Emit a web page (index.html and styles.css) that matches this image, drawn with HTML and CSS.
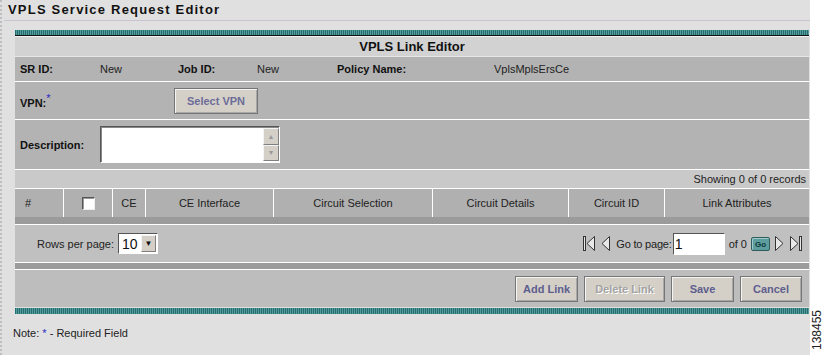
FILE: index.html
```html
<!DOCTYPE html>
<html lang="en">
  <head>
    <meta charset="UTF-8">
    <title>VPLS Service Request Editor</title>
    <link rel="stylesheet" href="styles.css">
  </head>
<body>
  <div class="page">
    <h1 class="page-title">VPLS Service Request Editor</h1>

    <div class="panel">
      <div class="stripe"></div>
      <div class="panel-head">VPLS Link Editor</div>

      <div class="row info-row">
        <span class="label">SR ID:</span>
        <span>New</span>
        <span class="label">Job ID:</span>
        <span>New</span>
        <span class="label">Policy Name:</span>
        <span>VplsMplsErsCe</span>
      </div>

      <div class="row vpn-row">
        <span class="label">VPN:<sup class="req">*</sup></span>
        <button class="btn btn-wide">Select VPN</button>
      </div>

      <div class="row desc-row">
        <span class="label">Description:</span>
        <div class="textbox">
          <div class="textbox-area"></div>
          <div class="scroll">
            <span class="scroll-btn">&#9650;</span>
            <span class="scroll-btn">&#9660;</span>
          </div>
        </div>
      </div>

      <div class="row count-row">Showing 0 of 0 records</div>

      <div class="grid-head">
        <div class="cell cell-left">#</div>
        <div class="cell"><span class="checkbox"></span></div>
        <div class="cell">CE</div>
        <div class="cell">CE Interface</div>
        <div class="cell">Circuit Selection</div>
        <div class="cell">Circuit Details</div>
        <div class="cell">Circuit ID</div>
        <div class="cell cell-last">Link Attributes</div>
      </div>
      <div class="band"></div>

      <div class="row pager-row">
        <div class="rows-per-page">
          Rows per page:
          <div class="select">
            <span class="select-value">10</span>
            <span class="select-btn">&#9660;</span>
          </div>
        </div>
        <div class="pager-nav">
          <svg class="nav-icon" width="13" height="17" viewBox="0 0 13 17">
            <rect x="0.5" y="1.5" width="2" height="14" fill="#e8e8e8" stroke="#333"/>
            <path d="M11.5 1.5 L4 8.5 L11.5 15.5 Z" fill="#e8e8e8" stroke="#333"/>
          </svg>
          <svg class="nav-icon" width="11" height="17" viewBox="0 0 11 17">
            <path d="M9.5 1.5 L2 8.5 L9.5 15.5 Z" fill="#e8e8e8" stroke="#333"/>
          </svg>
          <span class="go-label">Go to page:</span>
          <span class="page-input">1</span>
          <span>of 0</span>
          <span class="go-btn">Go</span>
          <svg class="nav-icon" width="11" height="17" viewBox="0 0 11 17">
            <path d="M1.5 1.5 L9 8.5 L1.5 15.5 Z" fill="#e8e8e8" stroke="#333"/>
          </svg>
          <svg class="nav-icon" width="14" height="17" viewBox="0 0 14 17">
            <path d="M1.5 1.5 L9 8.5 L1.5 15.5 Z" fill="#e8e8e8" stroke="#333"/>
            <rect x="10.5" y="1.5" width="2" height="14" fill="#e8e8e8" stroke="#333"/>
          </svg>
        </div>
      </div>
      <div class="band band-low"></div>

      <div class="row action-row">
        <button class="btn">Add Link</button>
        <button class="btn btn-off">Delete Link</button>
        <button class="btn">Save</button>
        <button class="btn">Cancel</button>
      </div>
      <div class="stripe stripe-bottom"></div>
    </div>

    <p class="note">Note: <span class="req">*</span> - Required Field</p>
  </div>

  <div class="fig-id">138455</div>
</body>
</html>
```

FILE: styles.css
```css
body {
  margin: 0;
  padding: 0;
  background: #fff;
  font-family: "Liberation Sans", Arial, sans-serif;
  font-size: 11px;
  color: #222;
}

.page {
  width: 810px;
  height: 355px;
  box-sizing: border-box;
  background: #e0e0e0;
  border-left: 2px dotted #bdbdbd;
  padding-left: 13px;
}

.page-title {
  margin: 0 0 0 -11px;
  padding: 2px 0 0 4px;
  height: 18px;
  font-size: 13px;
  letter-spacing: 1.2px;
  color: #111;
  border-bottom: 1px solid #cbc3d2;
}

.panel {
  margin-top: 9px;
  width: 794px;
}

.stripe {
  height: 5px;
  background: repeating-linear-gradient(to right, #1f6f70 0, #1f6f70 1px, #5a9c9c 1px, #5a9c9c 2px);
  border-bottom: 1px solid #111;
  box-shadow: 0 1px 0 #f2f2f2;
  margin-bottom: 1px;
}

.stripe-bottom {
  border-bottom: none;
  box-shadow: none;
  height: 6px;
  margin-top: 1px;
  margin-bottom: 0;
}

.panel-head {
  height: 19px;
  line-height: 19px;
  background: #d2d2d2;
  text-align: center;
  font-weight: bold;
  font-size: 13px;
  color: #111;
  border-bottom: 1px solid #e6e6e6;
}

.row {
  display: flex;
  align-items: center;
  box-sizing: border-box;
  border-bottom: 1px solid #fff;
  background: #b3b3b3;
}

.label {
  font-weight: bold;
  color: #111;
}

.req {
  color: #2a2ac0;
  font-weight: normal;
}

.info-row {
  display: grid;
  grid-template-columns: 80px 78px 79px 80px 157px auto;
  align-items: center;
  height: 25px;
  padding-left: 5px;
}

.vpn-row {
  height: 38px;
  padding-left: 5px;
}

.vpn-row .label {
  width: 154px;
}

.vpn-row sup {
  font-size: 11px;
  vertical-align: 5px;
}

.desc-row {
  height: 50px;
  padding-left: 5px;
}

.desc-row .label {
  width: 80px;
}

.btn {
  height: 26px;
  width: 63px;
  padding: 0;
  font-family: "Liberation Sans", Arial, sans-serif;
  font-size: 11px;
  font-weight: bold;
  color: #5e5e8e;
  background: #d4d0c8;
  border: 1px solid #767676;
  box-shadow: inset 1px 1px 0 #f4f4f4, inset -1px -1px 0 #a8a8a8;
}

.btn-wide {
  width: 84px;
  color: #6c6c98;
}

.btn-off {
  width: 81px;
  color: #a3a3a3;
  text-shadow: 1px 1px 0 #fff;
}

.textbox {
  display: flex;
  width: 180px;
  height: 37px;
  box-sizing: border-box;
  border: 1px solid;
  border-color: #555 #fff #fff #555;
  box-shadow: inset 1px 1px 0 #888;
  background: #fff;
}

.textbox-area {
  flex: 1;
}

.scroll {
  display: flex;
  flex-direction: column;
  width: 16px;
  padding: 1px 0;
}

.scroll-btn {
  flex: 1;
  display: flex;
  align-items: center;
  justify-content: center;
  font-size: 7px;
  color: #9a9a9a;
  background: #d4d0c8;
  border: 1px solid;
  border-color: #f4f4f4 #808080 #808080 #f4f4f4;
}

.count-row {
  height: 19px;
  justify-content: flex-end;
  padding-right: 3px;
  background: #c9c9c9;
  color: #222;
}

.grid-head {
  display: grid;
  grid-template-columns: 49px 49px 33px 128px 159px 136px 96px 144px;
  height: 28px;
  background: #b0b0b0;
}

.cell {
  display: flex;
  align-items: center;
  justify-content: center;
  border-right: 1px solid #fff;
}

.cell-left {
  justify-content: flex-start;
  padding-left: 10px;
}

.cell-last {
  border-right: none;
}

.checkbox {
  width: 13px;
  height: 13px;
  box-sizing: border-box;
  background: #fff;
  border: 1px solid;
  border-color: #555 #eee #eee #555;
  box-shadow: inset 1px 1px 0 #999;
}

.band {
  height: 7px;
  background: #9b9b9b;
  border-bottom: 1px solid #fff;
}

.band-low {
  height: 6px;
}

.pager-row {
  height: 38px;
  justify-content: space-between;
  background: #c0c0c0;
  padding: 0 6px 0 22px;
}

.rows-per-page {
  display: flex;
  align-items: center;
  gap: 4px;
}

.select {
  display: flex;
  align-items: center;
  width: 40px;
  height: 21px;
  box-sizing: border-box;
  background: #fff;
  border: 1px solid;
  border-color: #555 #fff #fff #555;
}

.select-value {
  flex: 1;
  font-size: 14px;
  padding-left: 3px;
  color: #111;
}

.select-btn {
  width: 15px;
  height: 17px;
  margin-right: 1px;
  box-sizing: border-box;
  display: flex;
  align-items: center;
  justify-content: center;
  font-size: 8px;
  color: #111;
  background: #d4d0c8;
  border: 1px solid;
  border-color: #f4f4f4 #808080 #808080 #f4f4f4;
}

.pager-nav {
  display: flex;
  align-items: center;
  gap: 4px;
}

.go-label {
  margin-left: 1px;
  margin-right: -3px;
  letter-spacing: -0.2px;
}

.page-input {
  width: 52px;
  height: 22px;
  box-sizing: border-box;
  background: #fff;
  border: 1px solid;
  border-color: #555 #fff #fff #555;
  font-size: 14px;
  line-height: 20px;
  padding-left: 1px;
  color: #111;
}

.go-btn {
  width: 19px;
  height: 14px;
  line-height: 13px;
  box-sizing: border-box;
  text-align: center;
  font-size: 8px;
  font-weight: bold;
  color: #0d3b3b;
  background: #5d9d9d;
  border: 1px solid #2d5d5d;
  border-radius: 2px;
  box-shadow: inset 1px 1px 0 #9fcaca;
}

.action-row {
  height: 37px;
  justify-content: flex-end;
  gap: 6px;
  padding-right: 7px;
  background: #bdbdbd;
  border-bottom: none;
}

.action-row .btn:last-child {
  width: 62px;
}

.note {
  margin: 13px 0 0 -2px;
  font-size: 11px;
  color: #222;
}

.fig-id {
  position: absolute;
  left: 811px;
  top: 310px;
  writing-mode: vertical-rl;
  transform: rotate(180deg);
  font-size: 12px;
  line-height: 12px;
  color: #222;
}
```
